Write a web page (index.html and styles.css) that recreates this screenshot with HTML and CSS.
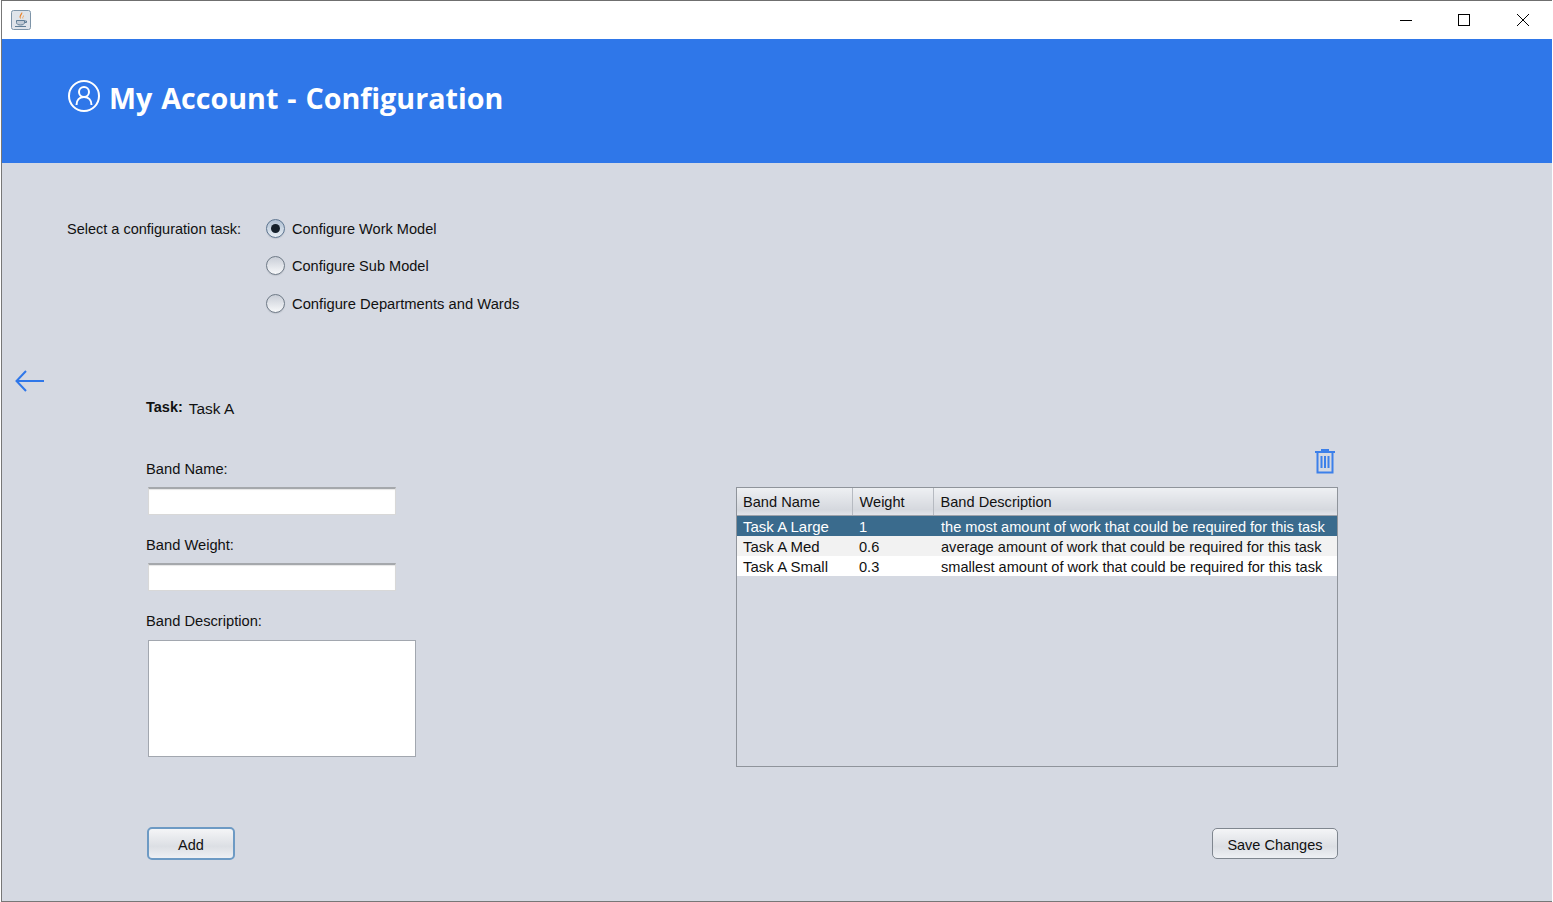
FILE: index.html
```html
<!DOCTYPE html>
<html lang="en">
<head>
    <meta charset="UTF-8">
    <title>My Account - Configuration</title>
    <link rel="stylesheet" href="styles.css">
</head>
<body>
<div class="window">

    <div class="titlebar">
        <svg class="app-icon" width="20" height="20" viewBox="0 0 20 20">
            <rect x="0.5" y="0.5" width="19" height="19" rx="2" fill="#dfe4ea" stroke="#7d94a8"/>
            <path d="M11 2c1.500 2.200-2.500 3.500-1 7c-3-2-.5-4.500 1-7z" fill="#e8822a"/>
            <path d="M13 5c.5 1.500-1.500 2-.8 4c-1.700-1.200-.2-2.800 .8-4z" fill="#f0a050"/>
            <path d="M5.500 10.500h8v2c0 1.500-1.500 2.500-4 2.500s-4-1-4-2.500z" fill="#c3ccd6" stroke="#5f7d95"/>
            <path d="M13.500 11h2v1.500h-2M4 16.500h11" fill="none" stroke="#5f7d95"/>
        </svg>
        <div class="win-controls">
            <button class="win-btn"><svg width="14" height="14" viewBox="0 0 14 14"><path d="M1 7.500h12" stroke="#000"/></svg></button>
            <button class="win-btn"><svg width="14" height="14" viewBox="0 0 14 14"><rect x="1.500" y="1.500" width="11" height="11" fill="none" stroke="#000"/></svg></button>
            <button class="win-btn"><svg width="14" height="14" viewBox="0 0 14 14"><path d="M1 1l12 12M13 1L1 13" stroke="#000"/></svg></button>
        </div>
    </div>

    <div class="banner">
        <svg class="user-icon" width="34" height="34" viewBox="0 0 34 34" fill="none" stroke="#fff" stroke-width="2">
            <circle cx="17" cy="17" r="15"/>
            <circle cx="17" cy="13" r="5"/>
            <path d="M9.500 26c0-5 3-8 7.500-8s7.500 3 7.500 8"/>
        </svg>
        <h1 class="banner-title">My Account - Configuration</h1>
    </div>

    <div class="content">
        <div class="task-select">
            <span class="select-label">Select a configuration task:</span>
            <div class="radio-list">
                <label class="radio-row"><span class="radio checked"></span>Configure Work Model</label>
                <label class="radio-row"><span class="radio"></span>Configure Sub Model</label>
                <label class="radio-row radio-wide"><span class="radio"></span>Configure Departments and Wards</label>
            </div>
        </div>

        <svg class="back-arrow" width="32" height="24" viewBox="0 0 32 24" fill="none" stroke="#2f77e9" stroke-width="2">
            <path d="M30 12H3M12 2L2.500 12l9.500 10"/>
        </svg>

        <div class="editor">
            <div class="task-line"><b>Task:</b><span>Task A</span></div>

            <div class="editor-grid">
                <div class="band-form">
                    <div class="field-label">Band Name:</div>
                    <div class="text-input"></div>
                    <div class="field-label">Band Weight:</div>
                    <div class="text-input"></div>
                    <div class="field-label">Band Description:</div>
                    <div class="text-area"></div>
                </div>

                <div class="band-list">
                    <div class="trash-row">
                        <svg width="20" height="25" viewBox="0 0 20 25" fill="none" stroke="#3c80ea" stroke-width="2">
                            <path d="M0 3h20M7 3V1h6V3M2.500 3v20.500h15V3"/>
                            <path d="M6.500 7v12M10 7v12M13.500 7v12"/>
                        </svg>
                    </div>
                    <div class="table-box">
                        <table class="band-table">
                            <thead>
                                <tr><th class="col-name">Band Name</th><th class="col-weight">Weight</th><th>Band Description</th></tr>
                            </thead>
                            <tbody>
                                <tr class="selected"><td>Task A Large</td><td>1</td><td>the most amount of work that could be required for this task</td></tr>
                                <tr class="zebra"><td>Task A Med</td><td>0.6</td><td>average amount of work that could be required for this task</td></tr>
                                <tr><td>Task A Small</td><td>0.3</td><td>smallest amount of work that could be required for this task</td></tr>
                            </tbody>
                        </table>
                    </div>
                </div>
            </div>

            <div class="actions">
                <button class="btn btn-focus">Add</button>
                <button class="btn">Save Changes</button>
            </div>
        </div>
    </div>
</div>
</body>
</html>
```

FILE: styles.css
```css
html, body{
    margin: 0;
    padding: 0;
}
body{
    font-family: "Liberation Sans", Arial, sans-serif;
    font-size: 14.7px;
    color: #111;
    background: #fff;
}
.window{
    width: 1551px;
    height: 902px;
    margin-left: 1px;
    box-sizing: border-box;
    border-top: 1px solid #6f6f6f;
    border-left: 1px solid #777;
    border-bottom: 1px solid #777;
    overflow: hidden;
    display: flex;
    flex-direction: column;
}

.titlebar{
    height: 38px;
    flex: none;
    background: #fff;
    display: flex;
    align-items: center;
    justify-content: space-between;
    padding-left: 9px;
}
.app-icon{
    margin-top: -1px;
}
.win-controls{
    display: flex;
}
.win-btn{
    width: 58.500px;
    height: 38px;
    padding: 0;
    border: none;
    background: none;
    display: flex;
    align-items: center;
    justify-content: center;
}

.banner{
    height: 124px;
    flex: none;
    background: #2f77e9;
    display: flex;
    align-items: center;
    padding-left: 65px;
    gap: 8px;
}
.user-icon{
    margin-top: -11px;
}
.banner-title{
    margin: 0 0 6px;
    color: #fff;
    font-family: "Open Sans", sans-serif;
    font-weight: 700;
    font-size: 28.66px;
    word-spacing: 1.5px;
    line-height: 40px;
}

.content{
    flex: 1;
    display: flex;
    flex-direction: column;
    background: #d5d9e2;
}
.task-select{
    display: flex;
    padding: 55px 0 0 65px;
}
.select-label{
    width: 199px;
    line-height: 22px;
    font-size: 14.5px;
}
.radio-list{
    display: flex;
    flex-direction: column;
    gap: 15px;
    font-size: 14.55px;
}
.radio-row{
    height: 22px;
    display: flex;
    align-items: center;
    gap: 7px;
}
.radio-wide{
    margin-top: 1px;
    font-size: 14.76px;
}
.radio{
    width: 19px;
    height: 19px;
    margin-top: -2px;
    border-radius: 50%;
    box-sizing: border-box;
    border: 1px solid #6f7a87;
    background: linear-gradient(#c9ced7, #f7f8fa);
    box-shadow: 0 1px 1px #bfc4cc;
    display: flex;
    align-items: center;
    justify-content: center;
}
.radio.checked{
    background: linear-gradient(#aebfd2, #e8eef4);
    border-color: #5d7590;
}
.radio.checked::after{
    content: "";
    width: 9px;
    height: 9px;
    border-radius: 50%;
    background: #15202b;
}
.back-arrow{
    margin: 54px 0 0 12px;
    display: block;
}

.editor{
    width: 1192px;
    margin: 4px 0 0 144px;
}
.task-line{
    display: flex;
    align-items: center;
    gap: 6px;
    height: 20px;
    font-size: 14.5px;
}
.task-line span{
    margin-top: 4px;
    font-size: 15.4px;
}
.editor-grid{
    display: grid;
    grid-template-columns: 590px 602px;
    margin-top: 41px;
}
.field-label{
    height: 20px;
    line-height: 22px;
    margin-bottom: 9px;
}
.text-input{
    width: 248px;
    height: 28px;
    margin: 0 0 19px 2px;
    box-sizing: border-box;
    background: #fff;
    border: 1px solid #d8d8d8;
    border-top: 2px solid #a5a8ac;
    box-shadow: inset 0 1px 1px #e6e6e6;
}
.text-area{
    width: 268px;
    height: 117px;
    margin: 10px 0 0 2px;
    box-sizing: border-box;
    background: #fff;
    border: 1px solid #a2a7af;
}

.trash-row{
    display: flex;
    justify-content: flex-end;
    height: 38px;
    margin-top: -9px;
    padding-right: 3px;
}
.table-box{
    height: 280px;
    box-sizing: border-box;
    border: 1px solid #8f949b;
}
.band-table{
    width: 100%;
    border-collapse: collapse;
    table-layout: fixed;
    font-size: 14.6px;
}
.band-table th{
    height: 27px;
    box-sizing: border-box;
    padding: 2px 6px 0;
    text-align: left;
    font-weight: normal;
    background: linear-gradient(#eef0f3, #d5d8de 80%, #e3e5ea);
    border-right: 1px solid #b6bac1;
    border-bottom: 1px solid #9da2aa;
}
.band-table th:nth-child(2){
    padding-left: 7px;
}
.band-table th:last-child{
    border-right: none;
    padding-left: 7px;
}
.col-name{
    width: 115px;
}
.col-weight{
    width: 81px;
}
.band-table td{
    height: 18px;
    padding: 2px 6px 0;
    line-height: 18px;
    background: #fff;
    white-space: nowrap;
}
.band-table td:first-child{
    font-size: 15px;
}
.band-table td:nth-child(2){
    padding-left: 7px;
}
.band-table td:nth-child(3){
    padding-left: 8px;
}
.band-table .zebra td{
    background: #f2f2f2;
}
.band-table .selected td{
    background: #3a6b8d;
    color: #fff;
}

.actions{
    display: flex;
    justify-content: space-between;
    align-items: center;
    margin-top: 60px;
}
.btn{
    font-family: inherit;
    font-size: 14.5px;
    color: #111;
    height: 31px;
    padding: 2px 14.500px 0;
    border: 1px solid #7f868f;
    border-radius: 5px;
    background: linear-gradient(#f4f5f7, #dcdfe4 60%, #eef0f4);
}
.btn-focus{
    width: 88px;
    height: 33px;
    margin-left: 1px;
    border: 2px solid #6d9ac4;
}
```
